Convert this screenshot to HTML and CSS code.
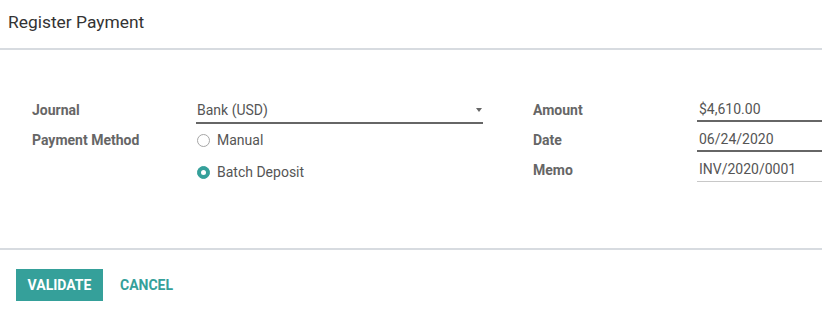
FILE: index.html
```html
<!DOCTYPE html>
<html>
<head>
<meta charset="utf-8">
<link rel="stylesheet" href="styles.css">
</head>
<body>
<div class="modal">
  <header class="modal-header">
    <h4 class="modal-title">Register Payment</h4>
  </header>
  <main class="modal-body">
    <div class="group group-left">
      <div class="row row-journal">
        <div class="label">Journal</div>
        <div class="field select">
          <span>Bank (USD)</span>
          <span class="caret"></span>
        </div>
      </div>
      <div class="row row-manual">
        <div class="label">Payment Method</div>
        <div class="radio"><span class="dot"></span><span>Manual</span></div>
      </div>
      <div class="row row-batch">
        <div class="label"></div>
        <div class="radio"><span class="dot checked"></span><span>Batch Deposit</span></div>
      </div>
    </div>
    <div class="group group-right">
      <div class="rrow">
        <div class="label">Amount</div>
        <div class="field input">$4,610.00</div>
      </div>
      <div class="rrow">
        <div class="label">Date</div>
        <div class="field input">06/24/2020</div>
      </div>
      <div class="rrow">
        <div class="label">Memo</div>
        <div class="field input light">INV/2020/0001</div>
      </div>
    </div>
  </main>
  <footer class="modal-footer">
    <button class="btn btn-primary">VALIDATE</button>
    <button class="btn btn-link">CANCEL</button>
  </footer>
</div>
</body>
</html>
```
FILE: styles.css
```css
* { box-sizing: border-box; }
html, body { margin: 0; padding: 0; background: #fff; overflow: hidden; }
body {
  font-family: Roboto, "Liberation Sans", sans-serif;
  font-size: 14px;
  color: #555;
  width: 822px;
  height: 312px;
}
.modal { display: flex; flex-direction: column; }
.modal-header {
  height: 50px;
  padding: 0 8px;
  border-bottom: 2px solid #d7dbe0;
  display: flex;
  align-items: flex-start;
}
.modal-title {
  margin: 0;
  padding-top: 11px;
  font-size: 17.4px;
  font-weight: 400;
  line-height: 22px;
  color: #333;
}
.modal-body {
  height: 200px;
  padding: 48px 0 0 32px;
  display: flex;
  gap: 50px;
  border-bottom: 2px solid #d7dbe0;
  overflow: hidden;
}
.group { display: flex; flex-direction: column; flex: none; }
.group-left { width: 451px; }
.group-right { gap: 6px; }
.row { display: flex; }
.row-manual { margin-top: 4px; }
.row-batch { margin-top: 8px; }
.label {
  width: 164px;
  flex: none;
  font-weight: 700;
  color: #666;
  line-height: 24px;
}
.field { color: #555; }
.select {
  flex: 1;
  height: 26px;
  line-height: 24px;
  padding-left: 1px;
  border-bottom: 2px solid #666;
  display: flex;
  justify-content: space-between;
  align-items: center;
}
.caret {
  width: 0; height: 0;
  border-left: 3.5px solid transparent;
  border-right: 3.5px solid transparent;
  border-top: 4px solid #666;
  margin-right: 1px;
}
.radio {
  display: flex;
  align-items: center;
  gap: 7px;
  line-height: 24px;
  padding-left: 1px;
}
.dot {
  width: 13px; height: 13px;
  border-radius: 50%;
  border: 1px solid #a6a6a6;
  display: inline-flex;
  align-items: center;
  justify-content: center;
}
.dot.checked {
  background: #35a09a;
  border-color: #35a09a;
}
.dot.checked::after {
  content: "";
  width: 5px; height: 5px;
  border-radius: 50%;
  background: #fff;
}
.rrow { display: flex; height: 24px; }
.input {
  width: 160px;
  flex: none;
  height: 24px;
  line-height: 22px;
  padding-left: 2px;
  border-bottom: 2px solid #666;
}
.input.light { border-bottom: 1px solid #c8c8c8; line-height: 23px; }
.modal-footer {
  padding: 19px 16px 0;
  display: flex;
  align-items: center;
  gap: 1px;
}
.btn {
  font-family: Roboto, "Liberation Sans", sans-serif;
  font-size: 14px;
  font-weight: 700;
  border: none;
  height: 32px;
  padding: 0 11px;
  cursor: pointer;
}
.btn-primary { background: #35a09a; color: #fff; width: 87px; }
.btn-link { background: transparent; color: #35a09a; padding: 0 16px; }
```
